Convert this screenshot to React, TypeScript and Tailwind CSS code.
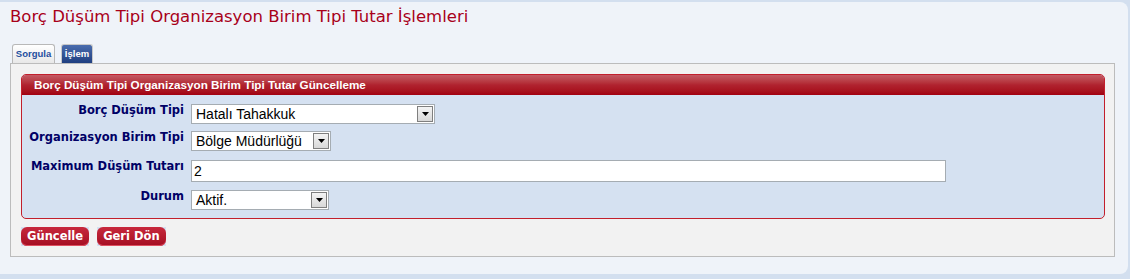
function Select({ value, width }: { value: string; width: string }) {
  return (
    <div className={`flex h-[20px] items-stretch border border-[#a5acb2] bg-white ${width}`}>
      <span className="flex-1 pl-[4px] font-['Liberation_Sans',Arial,sans-serif] text-[14px] leading-[18px] text-black">
        {value}
      </span>
      <span className="m-[1px] flex w-[16px] items-center justify-center border border-[#7f7f7f] bg-gradient-to-b from-[#f4f4f4] to-[#d8d8d8]">
        <svg width="7" height="4" viewBox="0 0 7 4">
          <path d="M0 0h7L3.5 4z" fill="#000" />
        </svg>
      </span>
    </div>
  );
}

function Row({ label, height, children }: { label: string; height: string; children: React.ReactNode }) {
  return (
    <div className={`flex items-start gap-[7px] ${height}`}>
      <div className="w-[162px] text-right font-['DejaVu_Sans',Verdana,sans-serif] text-[11.5px] font-bold leading-[13px] text-[#000066]">
        {label}
      </div>
      {children}
    </div>
  );
}

function Button({ text }: { text: string }) {
  return (
    <div className="flex bg-[#d5e1f1]">
      <button className="h-[19px] rounded-[6px] bg-gradient-to-b from-[#c8283c] to-[#a50d22] px-[6px] font-['DejaVu_Sans',Verdana,sans-serif] text-[11.5px] font-bold leading-[19px] text-white shadow-[inset_0_-1px_0_#e05060]">
        {text}
      </button>
    </div>
  );
}

export default function App() {
  return (
    <div className="h-[279px] w-[1130px] bg-[#d3dfef] pt-[2px]">
      <div className="flex h-[272px] w-[1128px] flex-col rounded-r-[8px] bg-[#eff3f9] px-[10px]">
        <h1 className="pt-[5px] font-['DejaVu_Sans',Verdana,sans-serif] text-[16.5px] leading-[20px] text-[#a8001a]">
          Borç Düşüm Tipi Organizasyon Birim Tipi Tutar İşlemleri
        </h1>
        <div className="mt-[17px] flex items-end gap-[6px] pl-[2px]">
          <div className="flex h-[19px] w-[43px] items-center justify-center rounded-t-[3px] border border-b-0 border-[#b8b8b8] bg-gradient-to-b from-white to-[#e8e8e8] font-['Liberation_Sans',Tahoma,sans-serif] text-[9.5px] font-bold text-[#1e4e9e]">
            Sorgula
          </div>
          <div className="flex h-[19px] w-[32px] items-center justify-center rounded-t-[3px] border border-b-0 border-[#c8c8c8] bg-gradient-to-b from-[#4a6cae] to-[#203f80] font-['Liberation_Sans',Tahoma,sans-serif] text-[9.5px] font-bold text-white">
            İşlem
          </div>
        </div>
        <div className="h-[194px] w-[1105px] border border-[#bcbcbc] bg-[#f2f2f2] px-[10px] pt-[10px]">
          <div className="w-[1084px] overflow-hidden rounded-[5px] border border-[#c21f2c] bg-[#d5e1f1]">
            <div className="h-[20px] bg-gradient-to-b from-[#c45a64] via-[#b0222f] to-[#a20010] pl-[12px] font-['Liberation_Sans',Arial,sans-serif] text-[11.7px] font-bold leading-[20px] text-white">
              Borç Düşüm Tipi Organizasyon Birim Tipi Tutar Güncelleme
            </div>
            <div className="flex flex-col pb-[8px] pt-[9px]">
              <Row label="Borç Düşüm Tipi" height="h-[27px]">
                <Select value="Hatalı Tahakkuk" width="w-[244px]" />
              </Row>
              <Row label="Organizasyon Birim Tipi" height="h-[29px]">
                <Select value="Bölge Müdürlüğü" width="w-[140px]" />
              </Row>
              <Row label="Maximum Düşüm Tutarı" height="h-[30px]">
                <div className="h-[22px] w-[755px] border border-[#a5acb2] bg-white pl-[2px] font-['Liberation_Sans',Arial,sans-serif] text-[14px] leading-[21px] text-black">
                  2
                </div>
              </Row>
              <Row label="Durum" height="h-[20px]">
                <Select value="Aktif." width="w-[138px]" />
              </Row>
            </div>
          </div>
          <div className="mt-[8px] flex gap-[8px]">
            <Button text="Güncelle" />
            <Button text="Geri Dön" />
          </div>
        </div>
      </div>
    </div>
  );
}
